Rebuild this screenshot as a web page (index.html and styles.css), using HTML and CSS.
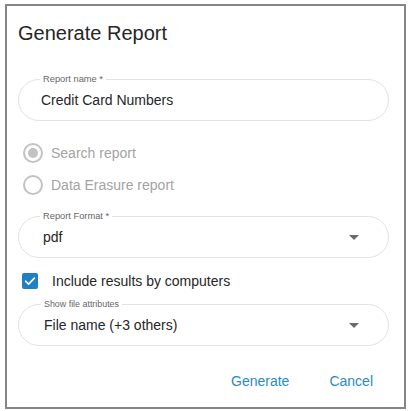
FILE: index.html
```html
<!DOCTYPE html>
<html>
<head>
<meta charset="utf-8">
<link rel="stylesheet" href="styles.css">
</head>
<body>
<div class="dialog">
  <h1 class="title">Generate Report</h1>

  <div class="field field-text">
    <span class="field-label">Report name *</span>
    <span class="field-value">Credit Card Numbers</span>
  </div>

  <div class="radio-group">
    <div class="radio-row">
      <span class="radio radio-checked"><span class="radio-dot"></span></span>
      <span class="radio-text">Search report</span>
    </div>
    <div class="radio-row">
      <span class="radio"></span>
      <span class="radio-text">Data Erasure report</span>
    </div>
  </div>

  <div class="field field-select field-format">
    <span class="field-label">Report Format *</span>
    <span class="field-value">pdf</span>
    <span class="arrow"></span>
  </div>

  <div class="check-row">
    <span class="checkbox">
      <svg width="16" height="16" viewBox="0 0 16 16"><path d="M3.6 8.2 L6.6 11.1 L12.4 5.1" fill="none" stroke="#fff" stroke-width="1.6" stroke-linecap="round" stroke-linejoin="round"/></svg>
    </span>
    <span class="check-text">Include results by computers</span>
  </div>

  <div class="field field-select field-attrs">
    <span class="field-label field-label-small">Show file attributes</span>
    <span class="field-value">File name (+3 others)</span>
    <span class="arrow"></span>
  </div>

  <div class="actions">
    <button class="btn">Generate</button>
    <button class="btn">Cancel</button>
  </div>
</div>
</body>
</html>
```

FILE: styles.css
```css
html, body {
  margin: 0;
  padding: 0;
  background: #fff;
}
body {
  font-family: "Liberation Sans", Arial, sans-serif;
  color: #262626;
}
.dialog {
  box-sizing: border-box;
  margin: 4px 0 0 5px;
  width: 401px;
  height: 405px;
  border: 2px solid #858585;
  padding: 15px 15px 0 11px;
  display: flex;
  flex-direction: column;
}
.title {
  margin: 0;
  font-size: 20px;
  line-height: 24px;
  font-weight: normal;
  color: #262626;
}
.field {
  position: relative;
  box-sizing: border-box;
  height: 42px;
  border: 1px solid #e2e2e2;
  border-radius: 21px;
  display: flex;
  align-items: center;
  font-size: 14px;
  color: #262626;
}
.field-text {
  margin-top: 34px;
  padding-left: 22px;
}
.field-select {
  padding-left: 24px;
  padding-right: 29px;
}
.field-format {
  margin-top: 15px;
}
.field-attrs {
  margin-top: 7px;
  padding-left: 25px;
}
.field-value {
  flex: 1;
  line-height: 18px;
}
.field-label {
  position: absolute;
  top: -7px;
  left: 21px;
  padding: 0 3px;
  background: #fff;
  font-size: 9.3px;
  line-height: 12px;
  color: #666;
}
.field-label-small {
  font-size: 8.9px;
  left: 22px;
}
.arrow {
  width: 0;
  height: 0;
  border-left: 5px solid transparent;
  border-right: 5px solid transparent;
  border-top: 5px solid #6a6a6a;
}
.radio-group {
  margin-top: 16px;
  display: flex;
  flex-direction: column;
}
.radio-row {
  height: 32px;
  display: flex;
  align-items: center;
  padding-left: 5px;
}
.radio {
  box-sizing: border-box;
  width: 20px;
  height: 20px;
  border: 2px solid #c2c2c2;
  border-radius: 50%;
  display: flex;
  align-items: center;
  justify-content: center;
}
.radio-dot {
  width: 10px;
  height: 10px;
  border-radius: 50%;
  background: #c2c2c2;
}
.radio-text {
  margin-left: 8px;
  font-size: 14px;
  color: #a3a3a3;
}
.check-row {
  margin-top: 7px;
  height: 32px;
  display: flex;
  align-items: center;
  padding-left: 4px;
}
.checkbox {
  width: 16px;
  height: 16px;
  border-radius: 2px;
  background: #1f80c6;
  display: flex;
}
.check-text {
  margin-left: 14px;
  font-size: 14px;
  color: #262626;
}
.actions {
  margin-top: 19px;
  margin-right: 8px;
  display: flex;
  justify-content: flex-end;
  gap: 24px;
}
.btn {
  border: none;
  background: none;
  padding: 6px 8px;
  font-family: "Liberation Sans", Arial, sans-serif;
  font-size: 14px;
  line-height: 20px;
  color: #2a89c8;
  cursor: pointer;
}
```
